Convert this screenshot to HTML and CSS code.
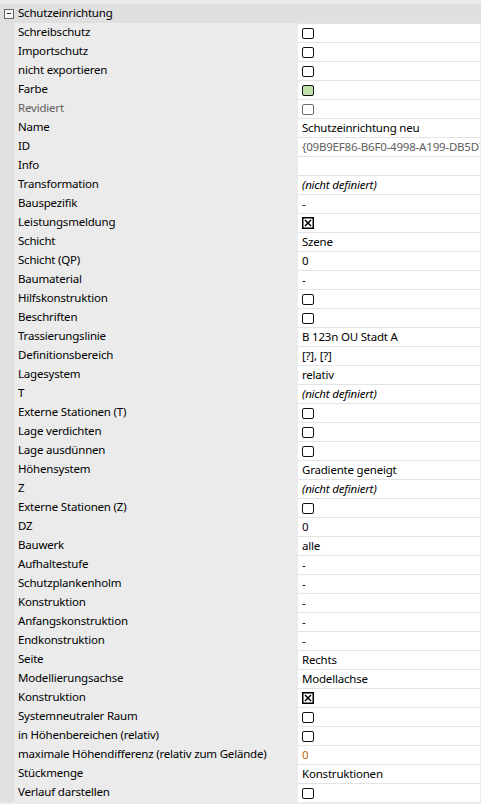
FILE: index.html
```html
<!DOCTYPE html>
<html lang="de">
<head>
<meta charset="utf-8">
<link rel="stylesheet" href="styles.css">
</head>
<body>
<div class="grid">
  <div class="cat">
    <span class="toggle"></span>
    <span class="cat-label">Schutzeinrichtung</span>
  </div>
  <div class="row"><div class="name">Schreibschutz</div><div class="val"><span class="cb"></span></div></div>
  <div class="row"><div class="name">Importschutz</div><div class="val"><span class="cb"></span></div></div>
  <div class="row"><div class="name">nicht exportieren</div><div class="val"><span class="cb"></span></div></div>
  <div class="row"><div class="name">Farbe</div><div class="val"><span class="cb green"></span></div></div>
  <div class="row"><div class="name dim">Revidiert</div><div class="val"><span class="cb gray"></span></div></div>
  <div class="row"><div class="name">Name</div><div class="val">Schutzeinrichtung neu</div></div>
  <div class="row"><div class="name">ID</div><div class="val dim">{09B9EF86-B6F0-4998-A199-DB5D7C0E1A2F}</div></div>
  <div class="row"><div class="name">Info</div><div class="val"></div></div>
  <div class="row"><div class="name">Transformation</div><div class="val it">(nicht definiert)</div></div>
  <div class="row"><div class="name">Bauspezifik</div><div class="val">-</div></div>
  <div class="row"><div class="name">Leistungsmeldung</div><div class="val"><span class="cbx"><svg width="12" height="12" viewBox="0 0 12 12"><rect x="0.75" y="0.75" width="10.5" height="10.5" fill="#fff" stroke="#000" stroke-width="1.5"/><path d="M3 3L9 9M9 3L3 9" stroke="#000" stroke-width="1.5"/></svg></span></div></div>
  <div class="row"><div class="name">Schicht</div><div class="val">Szene</div></div>
  <div class="row"><div class="name">Schicht (QP)</div><div class="val">0</div></div>
  <div class="row"><div class="name">Baumaterial</div><div class="val">-</div></div>
  <div class="row"><div class="name">Hilfskonstruktion</div><div class="val"><span class="cb"></span></div></div>
  <div class="row"><div class="name">Beschriften</div><div class="val"><span class="cb"></span></div></div>
  <div class="row"><div class="name">Trassierungslinie</div><div class="val">B 123n OU Stadt A</div></div>
  <div class="row"><div class="name">Definitionsbereich</div><div class="val">[?], [?]</div></div>
  <div class="row"><div class="name">Lagesystem</div><div class="val">relativ</div></div>
  <div class="row"><div class="name">T</div><div class="val it">(nicht definiert)</div></div>
  <div class="row"><div class="name">Externe Stationen (T)</div><div class="val"><span class="cb"></span></div></div>
  <div class="row"><div class="name">Lage verdichten</div><div class="val"><span class="cb"></span></div></div>
  <div class="row"><div class="name">Lage ausdünnen</div><div class="val"><span class="cb"></span></div></div>
  <div class="row"><div class="name">Höhensystem</div><div class="val">Gradiente geneigt</div></div>
  <div class="row"><div class="name">Z</div><div class="val it">(nicht definiert)</div></div>
  <div class="row"><div class="name">Externe Stationen (Z)</div><div class="val"><span class="cb"></span></div></div>
  <div class="row"><div class="name">DZ</div><div class="val">0</div></div>
  <div class="row"><div class="name">Bauwerk</div><div class="val">alle</div></div>
  <div class="row"><div class="name">Aufhaltestufe</div><div class="val">-</div></div>
  <div class="row"><div class="name">Schutzplankenholm</div><div class="val">-</div></div>
  <div class="row"><div class="name">Konstruktion</div><div class="val">-</div></div>
  <div class="row"><div class="name">Anfangskonstruktion</div><div class="val">-</div></div>
  <div class="row"><div class="name">Endkonstruktion</div><div class="val">-</div></div>
  <div class="row"><div class="name">Seite</div><div class="val">Rechts</div></div>
  <div class="row"><div class="name">Modellierungsachse</div><div class="val">Modellachse</div></div>
  <div class="row"><div class="name">Konstruktion</div><div class="val"><span class="cbx"><svg width="12" height="12" viewBox="0 0 12 12"><rect x="0.75" y="0.75" width="10.5" height="10.5" fill="#fff" stroke="#000" stroke-width="1.5"/><path d="M3 3L9 9M9 3L3 9" stroke="#000" stroke-width="1.5"/></svg></span></div></div>
  <div class="row"><div class="name">Systemneutraler Raum</div><div class="val"><span class="cb"></span></div></div>
  <div class="row"><div class="name">in Höhenbereichen (relativ)</div><div class="val"><span class="cb"></span></div></div>
  <div class="row"><div class="name">maximale Höhendifferenz (relativ zum Gelände)</div><div class="val orange">0</div></div>
  <div class="row"><div class="name">Stückmenge</div><div class="val">Konstruktionen</div></div>
  <div class="row"><div class="name">Verlauf darstellen</div><div class="val"><span class="cb"></span></div></div>
</div>
</body>
</html>
```
FILE: styles.css
```css
html, body {
  margin: 0;
  padding: 0;
  background: #ebebeb;
}
body {
  font-family: "Noto Sans", "Open Sans", sans-serif;
  font-size: 11.5px;
  letter-spacing: -0.2px;
  color: #000;
  width: 481px;
  height: 804px;
  overflow: hidden;
}
.grid {
  padding-top: 4px;
  display: flex;
  flex-direction: column;
}
.cat {
  height: 19px;
  background: #dfdfdf;
  display: flex;
  align-items: center;
}
.toggle {
  flex: 0 0 auto;
  width: 8px;
  height: 8px;
  border: 1px solid #666;
  margin-left: 4px;
  position: relative;
  background: #f4f4f4;
}
.toggle::after {
  content: "";
  position: absolute;
  left: 2px;
  right: 2px;
  top: 3px;
  height: 1px;
  background: #333;
}
.cat-label {
  margin-left: 4px;
  white-space: nowrap;
  padding-bottom: 2px;
}
.row {
  display: flex;
  height: 19px;
  background: linear-gradient(to right, #e0e0e0 0, #e0e0e0 14px, #ebebeb 14px);
}
.name {
  flex: 0 0 280px;
  margin-left: 14px;
  padding-left: 4px;
  box-sizing: border-box;
  display: flex;
  align-items: center;
  white-space: nowrap;
  padding-bottom: 2px;
}
.val {
  flex: 1;
  margin-left: 4px;
  margin-right: 1px;
  background: #fff;
  border-top: 1px solid #e3e3e3;
  padding-left: 4px;
  display: flex;
  align-items: center;
  white-space: nowrap;
  overflow: hidden;
  padding-bottom: 1px;
}
.val .cb, .val .cbx {
  margin-top: 1px;
}
.dim {
  color: #606060;
}
.it {
  font-style: italic;
}
.orange {
  color: #c06400;
}
.cb {
  flex: 0 0 auto;
  width: 10px;
  height: 9px;
  border: 1px solid #111;
  border-radius: 2px;
  background: #fff;
  display: block;
}
.cb.gray {
  border-color: #6d6d6d;
}
.cb.green {
  background: #bfe0a8;
}
.cbx {
  display: flex;
}
.cbx svg {
  display: block;
}
```
